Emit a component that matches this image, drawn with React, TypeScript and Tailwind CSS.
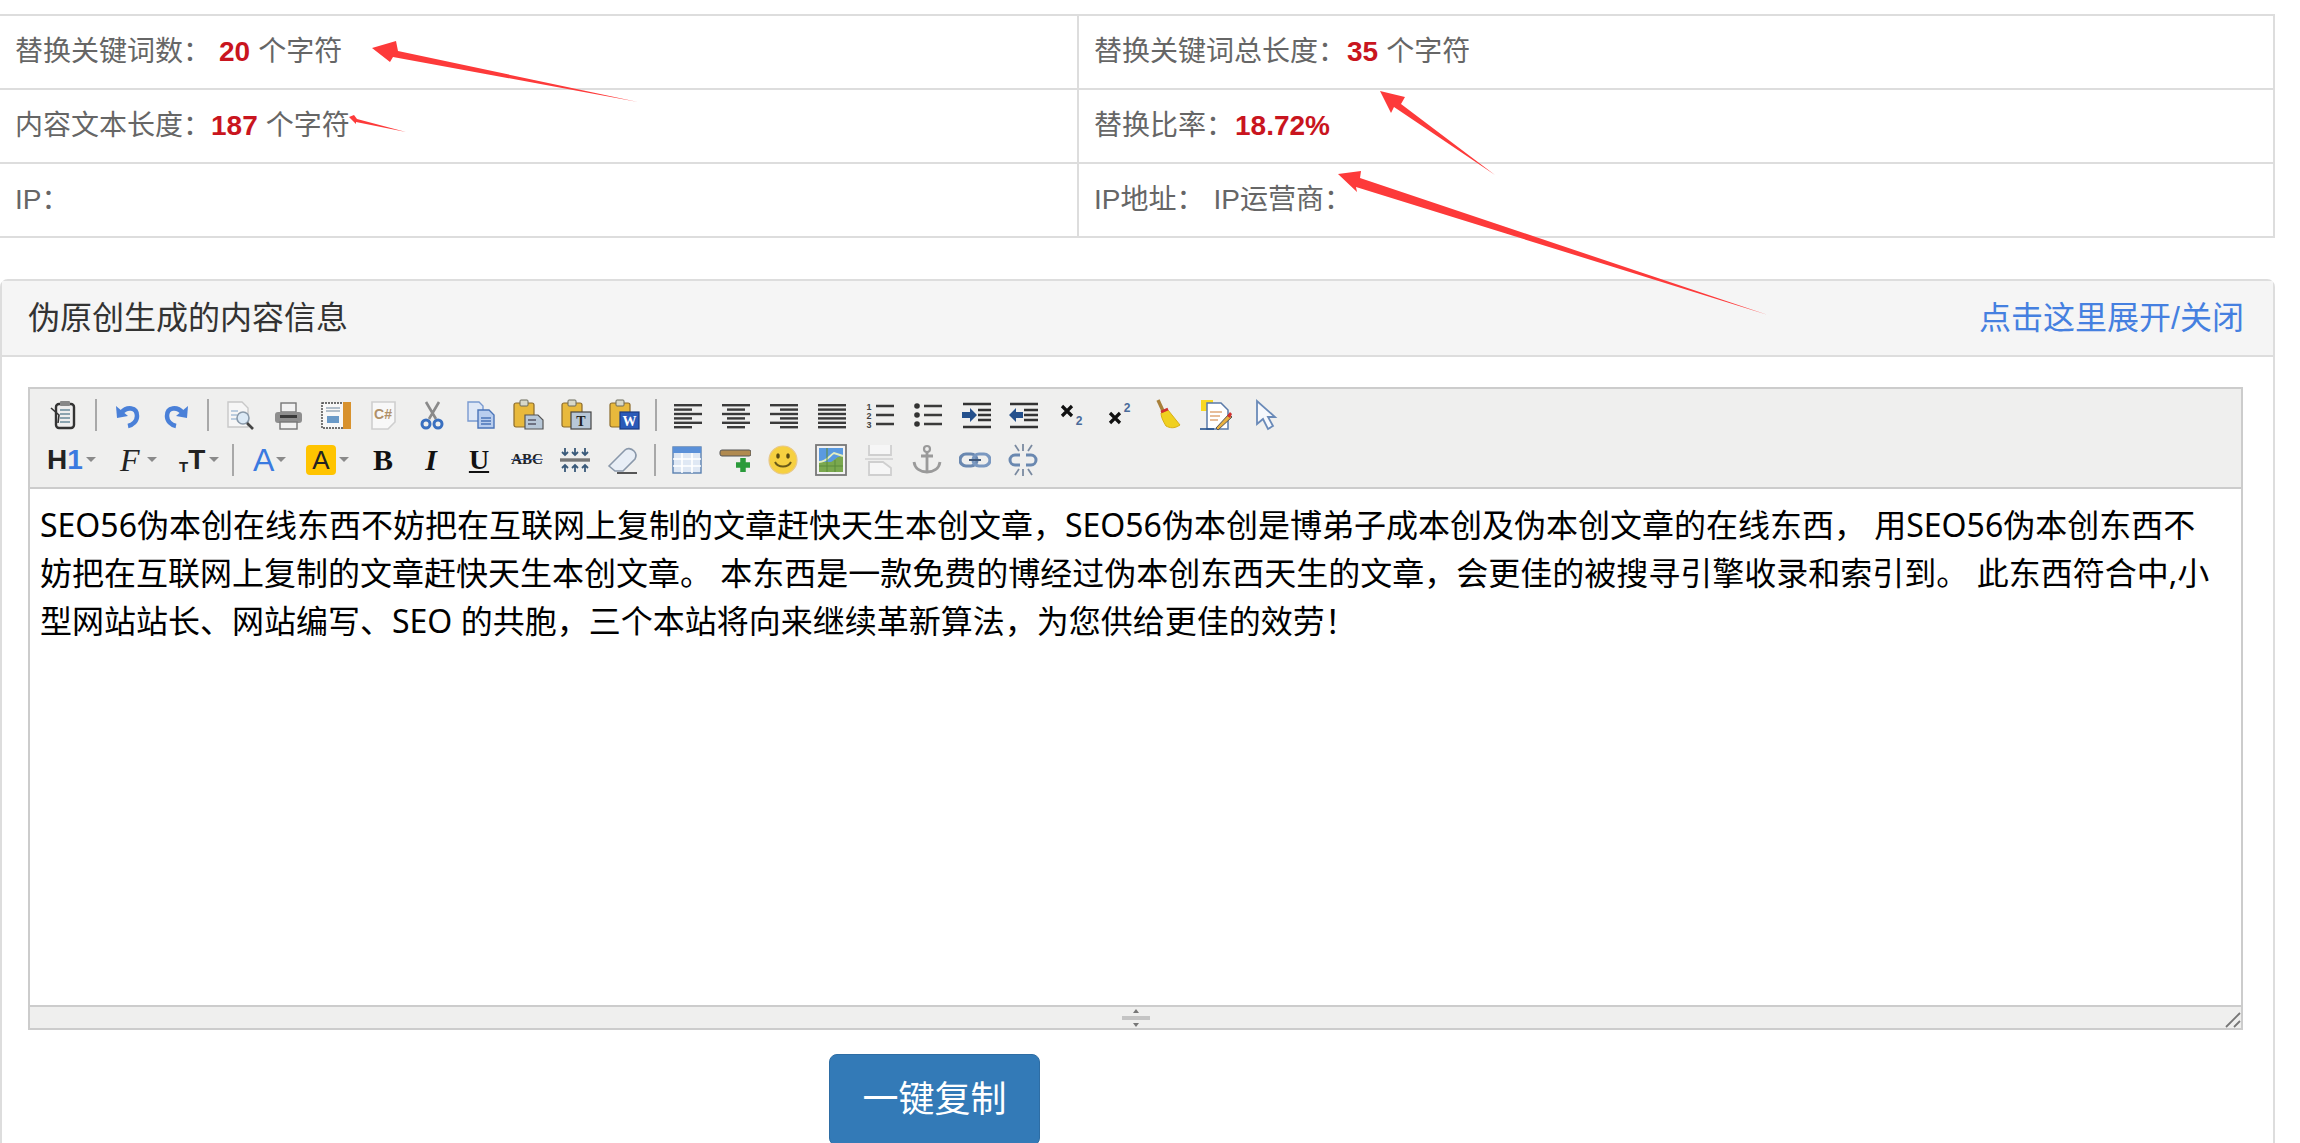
import type { ReactNode } from "react";

const cjk = "font-['Liberation_Sans','Noto_Sans_CJK_SC',sans-serif]";

function Ico({ children }: { children: ReactNode }) {
  return (
    <div className="flex h-[45px] w-[48px] shrink-0 items-center justify-center">
      <svg width="32" height="32" viewBox="0 0 32 32" fill="none">
        {children}
      </svg>
    </div>
  );
}

function Sep() {
  return (
    <div className="flex h-[45px] w-[16px] shrink-0 items-center justify-center">
      <div className="h-[32px] w-[2px] bg-[#a8a8a8]" />
    </div>
  );
}

function Caret() {
  return <span className="h-0 w-0 shrink-0 border-x-[5px] border-t-[5px] border-x-transparent border-t-[#8a8a8a]" />;
}

function Lines({ rows, color = "#3a3a3a" }: { rows: [number, number][]; color?: string }) {
  return (
    <>
      {rows.map(([x, w], i) => (
        <rect key={i} x={x} y={5 + i * 4.4} width={w} height="2.4" fill={color} />
      ))}
    </>
  );
}

function Board({ x = 2, y = 4, w = 20, h = 24 }: { x?: number; y?: number; w?: number; h?: number }) {
  return (
    <>
      <rect x={x} y={y} width={w} height={h} rx="2" fill="#e8b93c" stroke="#8a6a2a" strokeWidth="1.2" />
      <rect x={x + w / 2 - 4} y={y - 3} width="8" height="6" rx="1" fill="#d8d8c8" stroke="#6a6a5a" />
    </>
  );
}

const rowOne: ReactNode[] = [
  <Ico key="source">
    <rect x="8" y="5" width="18" height="24" rx="3" fill="#eee" stroke="#333" strokeWidth="2.4" />
    <path d="M12 11h10M12 15h10M12 19h10M12 23h10" stroke="#6a8a9a" strokeWidth="1.6" />
    <path d="M3 9l8 7-1 8" stroke="#333" strokeWidth="1.6" />
    <rect x="12" y="2" width="10" height="5" rx="1" fill="#888" />
  </Ico>,
  <Sep key="s1" />,
  <Ico key="undo">
    <path d="M9 14c6-7 16-6 16 3 0 5-4 9-9 10" stroke="#4a80d8" strokeWidth="4.5" />
    <path d="M4 7l1 12 11-2z" fill="#4a80d8" />
  </Ico>,
  <Ico key="redo">
    <path d="M23 14c-6-7-16-6-16 3 0 5 4 9 9 10" stroke="#4a80d8" strokeWidth="4.5" />
    <path d="M28 7l-1 12-11-2z" fill="#4a80d8" />
  </Ico>,
  <Sep key="s2" />,
  <Ico key="preview">
    <path d="M4 3h14l6 6v19H4z" fill="#f6f6f6" stroke="#c8c8c8" strokeWidth="1.4" />
    <path d="M7 12h7M7 16h6M7 20h7" stroke="#a8c0d8" strokeWidth="1.5" />
    <circle cx="19" cy="19" r="6" fill="#dceaf6" stroke="#8a9aaa" strokeWidth="1.6" />
    <path d="M23 24l6 6" stroke="#444" strokeWidth="2.6" />
  </Ico>,
  <Ico key="print">
    <rect x="9" y="4" width="15" height="9" fill="#f2f2f2" stroke="#777" strokeWidth="1.4" />
    <rect x="3" y="13" width="27" height="11" rx="3" fill="#8e8e8e" />
    <rect x="8" y="16" width="17" height="3" fill="#3a3a3a" />
    <rect x="8" y="23" width="17" height="7" fill="#f2f2f2" stroke="#777" strokeWidth="1.4" />
  </Ico>,
  <Ico key="template">
    <rect x="2" y="4" width="22" height="25" fill="#f8f8f8" stroke="#444" strokeWidth="1.4" strokeDasharray="2 1" />
    <rect x="23" y="3" width="8" height="27" fill="#d8922e" />
    <path d="M6 9h14M6 12h14" stroke="#9ab" strokeWidth="1.4" />
    <rect x="7" y="17" width="12" height="7" fill="#6a9ac8" />
  </Ico>,
  <Ico key="csharp">
    <path d="M4 3h23v20l-7 7H4z" fill="#f8f8f8" stroke="#cfcfcf" strokeWidth="1.6" />
    <text x="15" y="20" textAnchor="middle" fontSize="14" fontWeight="700" fontFamily="Liberation Sans" fill="#b09068">C#</text>
  </Ico>,
  <Ico key="cut">
    <path d="M10 3l10 17M23 3L13 20" stroke="#8a8a8a" strokeWidth="2.6" />
    <circle cx="10" cy="25" r="4" stroke="#3a70c0" strokeWidth="3" />
    <circle cx="22" cy="25" r="4" stroke="#3a70c0" strokeWidth="3" />
  </Ico>,
  <Ico key="copy">
    <path d="M4 3h11l4 4v15H4z" fill="#dfe8f6" stroke="#7a9ad0" strokeWidth="1.4" />
    <path d="M14 11h11l5 5v13H14z" fill="#b8cdee" stroke="#4a74b8" strokeWidth="1.4" />
    <path d="M17 19h10M17 22h10M17 25h10" stroke="#4a74b8" strokeWidth="1.4" />
  </Ico>,
  <Ico key="paste">
    <Board />
    <path d="M13 16h13l5 5v9H13z" fill="#b8c8d8" stroke="#555" strokeWidth="1.2" />
    <path d="M16 21h8M16 25h8" stroke="#556" strokeWidth="1.4" />
  </Ico>,
  <Ico key="pastetext">
    <Board />
    <rect x="11" y="13" width="20" height="17" fill="#b8c8d8" stroke="#444" strokeWidth="1.2" />
    <text x="21" y="27" textAnchor="middle" fontSize="14" fontWeight="700" fontFamily="Liberation Serif" fill="#222">T</text>
  </Ico>,
  <Ico key="pasteword">
    <Board />
    <rect x="12" y="13" width="19" height="17" fill="#2a5ab8" stroke="#1a3a80" strokeWidth="1.2" />
    <text x="21.5" y="27" textAnchor="middle" fontSize="14" fontWeight="700" fontFamily="Liberation Serif" fill="#fff">W</text>
  </Ico>,
  <Sep key="s3" />,
  <Ico key="left"><Lines rows={[[2, 28], [2, 18], [2, 28], [2, 18], [2, 28], [2, 18]]} /></Ico>,
  <Ico key="center"><Lines rows={[[2, 28], [7, 18], [2, 28], [7, 18], [2, 28], [7, 18]]} /></Ico>,
  <Ico key="right"><Lines rows={[[2, 28], [12, 18], [2, 28], [12, 18], [2, 28], [12, 18]]} /></Ico>,
  <Ico key="justify"><Lines rows={[[2, 28], [2, 28], [2, 28], [2, 28], [2, 28], [2, 28]]} /></Ico>,
  <Ico key="ol">
    <text x="5" y="11" textAnchor="middle" fontSize="9" fontWeight="700" fontFamily="Liberation Sans" fill="#444">1</text>
    <text x="5" y="20" textAnchor="middle" fontSize="9" fontWeight="700" fontFamily="Liberation Sans" fill="#444">2</text>
    <text x="5" y="29" textAnchor="middle" fontSize="9" fontWeight="700" fontFamily="Liberation Sans" fill="#444">3</text>
    <path d="M12 7h18M12 16h18M12 25h18" stroke="#3a3a3a" strokeWidth="2.4" />
  </Ico>,
  <Ico key="ul">
    <circle cx="5" cy="7" r="2.8" fill="#333" />
    <circle cx="5" cy="16" r="2.8" fill="#333" />
    <circle cx="5" cy="25" r="2.8" fill="#333" />
    <path d="M12 7h18M12 16h18M12 25h18" stroke="#3a3a3a" strokeWidth="2.4" />
  </Ico>,
  <Ico key="indent">
    <path d="M3 5h28M3 28h28M18 11h13M18 16h13M18 21h13" stroke="#333" strokeWidth="2.4" />
    <path d="M2 13h8V9l7 7-7 7v-4H2z" fill="#24508c" />
  </Ico>,
  <Ico key="outdent">
    <path d="M2 5h28M2 28h28M16 11h14M16 16h14M16 21h14" stroke="#333" strokeWidth="2.4" />
    <path d="M15 13H8V9l-7 7 7 7v-4h7z" fill="#24508c" />
  </Ico>,
  <Ico key="sub">
    <path d="M6 7l10 10M16 7L6 17" stroke="#111" strokeWidth="3.2" />
    <text x="23" y="26" textAnchor="middle" fontSize="12" fontWeight="700" fontFamily="Liberation Sans" fill="#4a6a9a">2</text>
  </Ico>,
  <Ico key="sup">
    <path d="M6 14l10 10M16 14L6 24" stroke="#111" strokeWidth="3.2" />
    <text x="23" y="13" textAnchor="middle" fontSize="12" fontWeight="700" fontFamily="Liberation Sans" fill="#4a6a9a">2</text>
  </Ico>,
  <Ico key="broom">
    <path d="M6 1l6 13" stroke="#a8803a" strokeWidth="3.4" />
    <path d="M9 14l7-3 12 15c-6 4-10 3-14 1C11 22 9 18 9 14z" fill="#f0d020" stroke="#d8b018" />
    <path d="M9 13l7-3" stroke="#d03030" strokeWidth="2.6" />
  </Ico>,
  <Ico key="spell">
    <rect x="1" y="1" width="12" height="11" fill="#f8d820" />
    <path d="M7 4h14l7 7v19H7z" fill="#fff" stroke="#5a7aa8" strokeWidth="1.5" />
    <path d="M10 13h12M10 17h10M10 21h8" stroke="#e0a878" strokeWidth="1.5" />
    <path d="M16 29l13-14 3 3-14 13z" fill="#e8b040" stroke="#555" />
    <path d="M27 17l3-4 2 2-2 4z" fill="#d03030" />
    <path d="M0 30h14" stroke="#24508c" strokeWidth="1.6" />
  </Ico>,
  <Ico key="select">
    <path d="M9 2v23l6-5 5 10 5-3-5-9h7z" fill="#f6f8fc" stroke="#6a8ab8" strokeWidth="1.8" />
  </Ico>,
];

const rowTwo: ReactNode[] = [
  <Ico key="table">
    <rect x="2" y="3" width="28" height="26" fill="#dfe8f4" stroke="#5a80b0" strokeWidth="1.4" />
    <rect x="2" y="3" width="28" height="6" fill="#5a90d8" />
    <path d="M2 15h28M2 22h28M11 9v20M21 9v20" stroke="#fff" strokeWidth="1.6" />
  </Ico>,
  <Ico key="hr">
    <rect x="1" y="6" width="31" height="6" rx="2" fill="#b08a50" stroke="#555" />
    <path d="M24 14v14M17 21h14" stroke="#2a9a3a" strokeWidth="5.5" />
  </Ico>,
  <Ico key="smile">
    <circle cx="16" cy="16" r="14" fill="#f6d040" stroke="#e8c888" strokeWidth="1.2" />
    <ellipse cx="11" cy="12" rx="1.8" ry="2.8" fill="#5a4a10" />
    <ellipse cx="21" cy="12" rx="1.8" ry="2.8" fill="#5a4a10" />
    <path d="M8 18c3 6 13 6 16 0" stroke="#6a5a18" strokeWidth="2" />
  </Ico>,
  <Ico key="image">
    <rect x="1" y="1" width="30" height="30" fill="#f2f2f2" stroke="#777" strokeWidth="1.8" />
    <rect x="4" y="4" width="24" height="24" fill="#7aa84e" />
    <path d="M4 4h24v8c-6 0-8 4-12 6H4z" fill="#5a9ae0" />
    <path d="M4 18c8 0 10-6 15-9l9 3" stroke="#e4eec0" strokeWidth="2" />
    <path d="M12 4v24M20 16v12M4 22h24" stroke="#5a8a3a" strokeWidth="1" />
  </Ico>,
  <Ico key="pagebreak">
    <path d="M6 1v10h22V1" fill="#f6f6f6" stroke="#cfcfcf" strokeWidth="1.8" />
    <path d="M2 15h28" stroke="#cfcfcf" strokeWidth="1.4" />
    <path d="M6 18h14l8 6v7H6z" fill="#f6f6f6" stroke="#cfcfcf" strokeWidth="1.8" />
  </Ico>,
  <Ico key="anchor">
    <circle cx="16" cy="5" r="3" stroke="#9a9a9a" strokeWidth="2.2" />
    <path d="M16 8v20M10 12h12" stroke="#9a9a9a" strokeWidth="2.8" />
    <path d="M3 18c1 7 7 10 13 10s12-3 13-10" stroke="#9a9a9a" strokeWidth="2.8" />
  </Ico>,
  <Ico key="link">
    <rect x="1" y="10" width="17" height="12" rx="6" stroke="#6a88b0" strokeWidth="3.2" />
    <rect x="14" y="10" width="17" height="12" rx="6" stroke="#7a98c0" strokeWidth="3.2" />
    <path d="M10 16h12" stroke="#40587a" strokeWidth="2" />
  </Ico>,
  <Ico key="unlink">
    <path d="M13 11H8a5 5 0 0 0 0 10h5M19 11h5a5 5 0 0 1 0 10h-5" stroke="#6a88b0" strokeWidth="3" />
    <path d="M8 1l4 6M16 0v7M25 1l-4 6M8 31l4-6M16 32v-7M25 31l-4-6" stroke="#7a8aa0" strokeWidth="1.8" />
  </Ico>,
];

function Info({ label, value, unit, gap }: { label: string; value: string; unit?: string; gap: string }) {
  return (
    <span>
      {label}：<b className={`font-bold text-[#c9151e] ${gap}`}>{value}</b>
      {unit && <span className="ml-[8px]">{unit}</span>}
    </span>
  );
}

function Arrow({ points }: { points: string }) {
  return <polygon points={points} fill="#fd3a3a" />;
}

export default function App() {
  return (
    <div className={`relative h-[1143px] w-full overflow-hidden bg-white pt-[14px] pr-[25px] text-[28px] text-[#666] ${cjk}`}>
      {/* stats table */}
      <div className="grid grid-cols-[1077px_1fr] border-y-2 border-r-2 border-[#ddd]">
        <div className="flex h-[72px] items-center pl-[15px]">
          <Info label="替换关键词数" value="20" unit="个字符" gap="ml-[8px]" />
        </div>
        <div className="flex h-[72px] items-center border-l-2 border-[#ddd] pl-[15px]">
          <Info label="替换关键词总长度" value="35" unit="个字符" gap="ml-px" />
        </div>
        <div className="flex h-[74px] items-center border-t-2 border-[#ddd] pl-[15px]">
          <Info label="内容文本长度" value="187" unit="个字符" gap="ml-0" />
        </div>
        <div className="flex h-[74px] items-center border-t-2 border-l-2 border-[#ddd] pl-[15px]">
          <Info label="替换比率" value="18.72%" gap="ml-px" />
        </div>
        <div className="flex h-[74px] items-center border-t-2 border-[#ddd] pl-[15px]">IP：</div>
        <div className="flex h-[74px] items-center border-t-2 border-l-2 border-[#ddd] pl-[15px]">
          IP地址：<span className="ml-[9px]">IP运营商：</span>
        </div>
      </div>

      {/* panel */}
      <div className="mt-[41px] h-[900px] rounded-t-lg border-2 border-[#ddd]">
        <div className="flex h-[76px] items-center justify-between border-b-2 border-[#ddd] bg-[#f5f5f5] pr-[29px] pl-[26px] text-[32px] text-[#333]">
          <span>伪原创生成的内容信息</span>
          <span className="text-[#4580e0]">点击这里展开/关闭</span>
        </div>

        <div className="pt-[30px] pr-[30px] pl-[26px]">
          <div className="border-2 border-[#ccc] bg-[#efefee]">
            <div className="h-[100px] border-b-2 border-[#ccc] pt-[3px]">
              <div className="flex pl-[10px]">{rowOne}</div>
              <div className="flex items-center">
                <div className="flex h-[45px] w-[195px] shrink-0 items-center pl-[17px] text-[#222]">
                  <span className="w-[39px] text-[28px] leading-none font-bold">
                    H<span className="text-[#3a7ae0]">1</span>
                  </span>
                  <Caret />
                  <span className="ml-[24px] w-[27px] font-['Liberation_Serif'] text-[32px] leading-none italic">F</span>
                  <Caret />
                  <span className="ml-[22px] flex w-[30px] items-end font-bold leading-none">
                    <span className="text-[15px]">T</span>
                    <span className="text-[28px]">T</span>
                  </span>
                  <Caret />
                </div>
                <Sep />
                <div className="flex h-[45px] w-[118px] shrink-0 items-center pl-[12px]">
                  <span className="w-[23px] text-[32px] leading-none text-[#3a7ae0]">A</span>
                  <Caret />
                  <span className="ml-[20px] flex h-[30px] w-[30px] shrink-0 items-center justify-center rounded bg-[#ffc400] text-[26px] leading-none text-[#222]">
                    A
                  </span>
                  <span className="ml-[3px] flex">
                    <Caret />
                  </span>
                </div>
                <div className="flex h-[45px] w-[48px] shrink-0 items-center justify-center font-['Liberation_Serif'] text-[30px] leading-none font-bold text-[#111]">B</div>
                <div className="flex h-[45px] w-[48px] shrink-0 items-center justify-center font-['Liberation_Serif'] text-[30px] leading-none font-bold text-[#111] italic">I</div>
                <div className="flex h-[45px] w-[48px] shrink-0 items-center justify-center font-['Liberation_Serif'] text-[28px] leading-none font-bold text-[#111] underline">U</div>
                <div className="flex h-[45px] w-[48px] shrink-0 items-center justify-center font-['Liberation_Serif'] text-[15px] leading-none font-bold text-[#222] line-through decoration-[#3a5a9a]">ABC</div>
                <Ico key="rule">
                  <path d="M1 16h30" stroke="#777" strokeWidth="3.4" />
                  <path d="M6 4v7M16 4v7M26 4v7M6 21v7M16 21v7M26 21v7M3 8l3 3 3-3M13 8l3 3 3-3M23 8l3 3 3-3M3 24l3-3 3 3M13 24l3-3 3 3M23 24l3-3 3 3" stroke="#3a5a7a" strokeWidth="1.8" />
                </Ico>
                <Ico key="eraser">
                  <path d="M2 22L18 6c2-2 6-2 9 1s2 6 1 8L16 27H8z" fill="#e8eef6" stroke="#8a98aa" strokeWidth="1.6" />
                  <path d="M10 29h20" stroke="#444" strokeWidth="1.8" />
                </Ico>
                <Sep />
                {rowTwo}
              </div>
            </div>
            <div className="h-[516px] bg-white px-[10px] pt-[12px] font-['Noto_Sans','Noto_Sans_CJK_SC',sans-serif] text-[32px] leading-[48px] whitespace-nowrap text-black">
              <div>SEO56伪本创在线东西不妨把在互联网上复制的文章赶快天生本创文章，SEO56伪本创是博弟子成本创及伪本创文章的在线东西， 用SEO56伪本创东西不</div>
              <div>妨把在互联网上复制的文章赶快天生本创文章。 本东西是一款免费的博经过伪本创东西天生的文章，会更佳的被搜寻引擎收录和索引到。 此东西符合中,小</div>
              <div>型网站站长、网站编写、SEO 的共胞，三个本站将向来继续革新算法，为您供给更佳的效劳！</div>
            </div>
            <div className="relative flex h-[23px] items-center justify-center border-t-2 border-[#ccc]">
              <svg width="30" height="20" viewBox="0 0 30 20">
                <path d="M15 1l3 4h-6zM15 19l-3-4h6z" fill="#777" />
                <rect x="1" y="8" width="28" height="4" fill="#c4c4c4" />
              </svg>
              <svg className="absolute right-0 bottom-0" width="16" height="16" viewBox="0 0 16 16">
                <path d="M1 15L15 1M9 15l6-6" stroke="#777" strokeWidth="1.8" />
              </svg>
            </div>
          </div>

          <div className="mt-[24px] ml-[801px] flex h-[92px] w-[211px] items-center justify-center rounded-lg border border-[#2e6da4] bg-[#337ab7] text-[36px] text-white">
            一键复制
          </div>
        </div>
      </div>

      {/* annotation arrows drawn on top of the screenshot */}
      <svg className="pointer-events-none absolute top-0 left-0" width="2300" height="1143">
        <Arrow points="372,48 396,41 398,51 638,102 393,57 390,62" />
        <Arrow points="349,117 354,115 357,119 406,132 356,122 356,124" />
        <Arrow points="1380,91 1405,97 1401,104 1495,175 1394,107 1391,113" />
        <Arrow points="1338,174 1361,171 1360,178 1768,315 1356,187 1357,192" />
      </svg>
    </div>
  );
}
